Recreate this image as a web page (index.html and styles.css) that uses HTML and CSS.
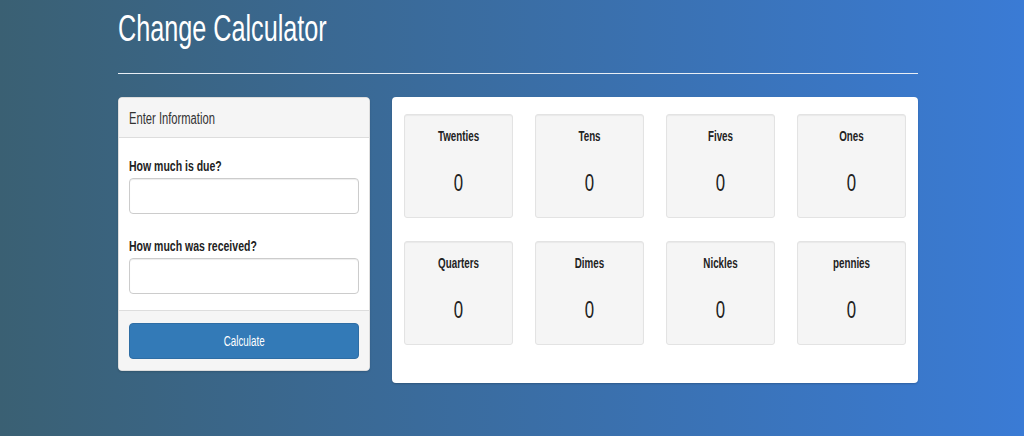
FILE: index.html
```html
<!DOCTYPE html>
<html>
<head>
<meta charset="utf-8">
<link rel="stylesheet" href="styles.css">
</head>
<body>
<div class="container">
  <h1 class="title">Change Calculator</h1>
  <hr class="rule">
  <div class="row">
    <div class="panel">
      <div class="panel-heading"><span class="narrow">Enter Information</span></div>
      <div class="panel-body">
        <label class="label first">How much is due?</label>
        <input class="input" type="text">
        <label class="label second">How much was received?</label>
        <input class="input" type="text">
      </div>
      <div class="panel-footer">
        <button class="btn"><span class="narrow">Calculate</span></button>
      </div>
    </div>
    <div class="results">
      <div class="well"><div class="well-title">Twenties</div><div class="well-value">0</div></div>
      <div class="well"><div class="well-title">Tens</div><div class="well-value">0</div></div>
      <div class="well"><div class="well-title">Fives</div><div class="well-value">0</div></div>
      <div class="well"><div class="well-title">Ones</div><div class="well-value">0</div></div>
      <div class="well"><div class="well-title">Quarters</div><div class="well-value">0</div></div>
      <div class="well"><div class="well-title">Dimes</div><div class="well-value">0</div></div>
      <div class="well"><div class="well-title">Nickles</div><div class="well-value">0</div></div>
      <div class="well"><div class="well-title">pennies</div><div class="well-value">0</div></div>
    </div>
  </div>
</div>
</body>
</html>
```
FILE: styles.css
```css
html, body {
  margin: 0;
  height: 100%;
}
body {
  background: linear-gradient(to right, #3a6073, #3a7bd5);
  font-family: "Liberation Sans", Arial, sans-serif;
  color: #333;
  overflow: hidden;
}
.container {
  margin-left: 118px;
  width: 800px;
}
.narrow {
  display: inline-block;
  transform: scaleX(0.7);
  transform-origin: left center;
}
.title {
  margin: 0;
  padding-top: 9px;
  font-size: 36px;
  font-weight: normal;
  color: #fff;
  line-height: 40px;
  transform: scaleX(0.7);
  transform-origin: left center;
}
.rule {
  margin: 24px 0 23px;
  border: 0;
  border-top: 1px solid #e8eef5;
  height: 0;
}
.row {
  display: flex;
  align-items: flex-start;
  gap: 22px;
}
.panel {
  width: 252px;
  background: #fff;
  border: 1px solid #ddd;
  border-radius: 4px;
  box-sizing: border-box;
  box-shadow: 0 1px 2px rgba(0,0,0,0.15);
  overflow: hidden;
}
.panel-heading {
  background: #f5f5f5;
  border-bottom: 1px solid #ddd;
  height: 39px;
  line-height: 41px;
  padding: 0 10px;
  font-size: 16px;
  color: #333;
}
.panel-body {
  padding: 19px 10px 16px;
  display: flex;
  flex-direction: column;
}
.label {
  display: block;
  font-weight: bold;
  font-size: 15px;
  line-height: 17px;
  margin-bottom: 4px;
  color: #222;
  transform: scaleX(0.7);
  transform-origin: left center;
}
.label.second {
  margin-top: 23px;
}
.input {
  height: 36px;
  box-sizing: border-box;
  border: 1px solid #ccc;
  border-radius: 4px;
  box-shadow: inset 0 1px 1px rgba(0,0,0,0.075);
  margin: 0;
}
.panel-footer {
  background: #f5f5f5;
  border-top: 1px solid #ddd;
  padding: 12px 10px 11px;
}
.btn {
  display: flex;
  align-items: center;
  justify-content: center;
  width: 100%;
  height: 36px;
  padding: 0;
  background: #337ab7;
  border: 1px solid #2e6da4;
  border-radius: 4px;
  color: #fff;
  font-family: inherit;
  font-size: 14px;
}
.btn .narrow {
  transform-origin: center center;
}
.results {
  width: 526px;
  box-sizing: border-box;
  background: #fff;
  border-radius: 4px;
  padding: 17px 12px 38px 12px;
  display: grid;
  grid-template-columns: repeat(4, 109px);
  column-gap: 22px;
  row-gap: 23px;
  box-shadow: 0 1px 2px rgba(0,0,0,0.2);
}
.well {
  height: 104px;
  box-sizing: border-box;
  background: #f5f5f5;
  border: 1px solid #e3e3e3;
  border-radius: 3px;
  box-shadow: inset 0 1px 1px rgba(0,0,0,0.05);
  text-align: center;
  padding-top: 13px;
}
.well-title {
  font-weight: bold;
  font-size: 14px;
  line-height: 16px;
  color: #222;
  transform: scaleX(0.7);
}
.well-value {
  font-size: 24px;
  line-height: 28px;
  margin-top: 25px;
  color: #222;
  transform: scaleX(0.7);
}
```
